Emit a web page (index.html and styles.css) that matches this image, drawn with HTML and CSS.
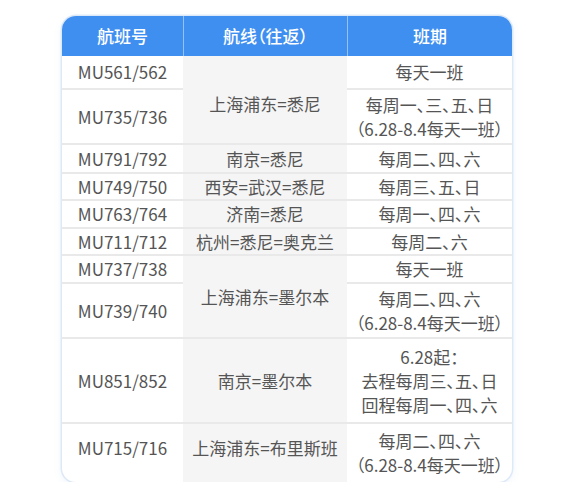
FILE: index.html
```html
<!DOCTYPE html>
<html lang="zh">
<head>
<meta charset="utf-8">
<link rel="stylesheet" href="styles.css">
</head>
<body>
<div class="card">
<table class="sched">
<colgroup><col class="c1"><col class="c2"><col class="c3"></colgroup>
<thead>
<tr class="h"><th>航班号</th><th>航线（往返）</th><th>班期</th></tr>
</thead>
<tbody>
<tr class="r32"><td>MU561/562</td><td class="route first" rowspan="2">上海浦东=悉尼</td><td>每天一班</td></tr>
<tr class="r55 grp"><td>MU735/736</td><td>每周一、三、五、日<br>（6.28-8.4每天一班）</td></tr>
<tr class="r29 grp"><td>MU791/792</td><td class="route">南京=悉尼</td><td>每周二、四、六</td></tr>
<tr class="r27 grp"><td>MU749/750</td><td class="route">西安=武汉=悉尼</td><td>每周三、五、日</td></tr>
<tr class="r28 grp"><td>MU763/764</td><td class="route">济南=悉尼</td><td>每周一、四、六</td></tr>
<tr class="r27 grp"><td>MU711/712</td><td class="route">杭州=悉尼=奥克兰</td><td>每周二、六</td></tr>
<tr class="r28"><td>MU737/738</td><td class="route" rowspan="2">上海浦东=墨尔本</td><td>每天一班</td></tr>
<tr class="r55 grp"><td>MU739/740</td><td>每周二、四、六<br>（6.28-8.4每天一班）</td></tr>
<tr class="r85 grp"><td>MU851/852</td><td class="route">南京=墨尔本</td><td>6.28起：<br>去程每周三、五、日<br>回程每周一、四、六</td></tr>
<tr class="r60 last"><td class="up">MU715/716</td><td class="route up">上海浦东=布里斯班</td><td>每周二、四、六<br>（6.28-8.4每天一班）</td></tr>
</tbody>
</table>
</div>
</body>
</html>
```
FILE: styles.css
```css
html, body {
  margin: 0;
  padding: 0;
  background: #ffffff;
}
body {
  font-family: "Noto Sans CJK SC", "Noto Sans", sans-serif;
  color: #555555;
}
.card {
  margin: 16px 0 0 62px;
  width: 450px;
  border-radius: 14px;
  overflow: hidden;
  box-shadow: 0 0 0 1.5px #dde9f7, 0 3px 8px rgba(70, 140, 230, 0.10);
  background: #fff;
}
.sched {
  width: 450px;
  table-layout: fixed;
  border-collapse: separate;
  border-spacing: 0;
  font-size: 17px;
  line-height: 24px;
  font-feature-settings: "palt";
}
.c1 { width: 121px; }
.c2 { width: 164px; }
.c3 { width: 165px; }
.sched th {
  height: 40px;
  padding: 0;
  background: #3f8ff0;
  color: #ffffff;
  font-weight: 500;
  text-align: center;
  vertical-align: middle;
  border-left: 1px solid rgba(255, 255, 255, 0.45);
}
.sched th:first-child { border-left: none; }
.sched td {
  padding: 0;
  text-align: center;
  vertical-align: middle;
  border-top: 2px solid #e9e9e9;
}
.sched tbody tr:first-child td { border-top: none; }
.sched td.route {
  background: #f5f5f5;
}
.sched td.first { padding-top: 8px; }
.sched td.up { padding-bottom: 10px; }
.r32 { height: 32px; }
.r27 { height: 27px; }
.r28 { height: 28px; }
.r29 { height: 29px; }
.r55 { height: 55px; }
.r85 { height: 85px; }
.r60 { height: 60px; }
```
